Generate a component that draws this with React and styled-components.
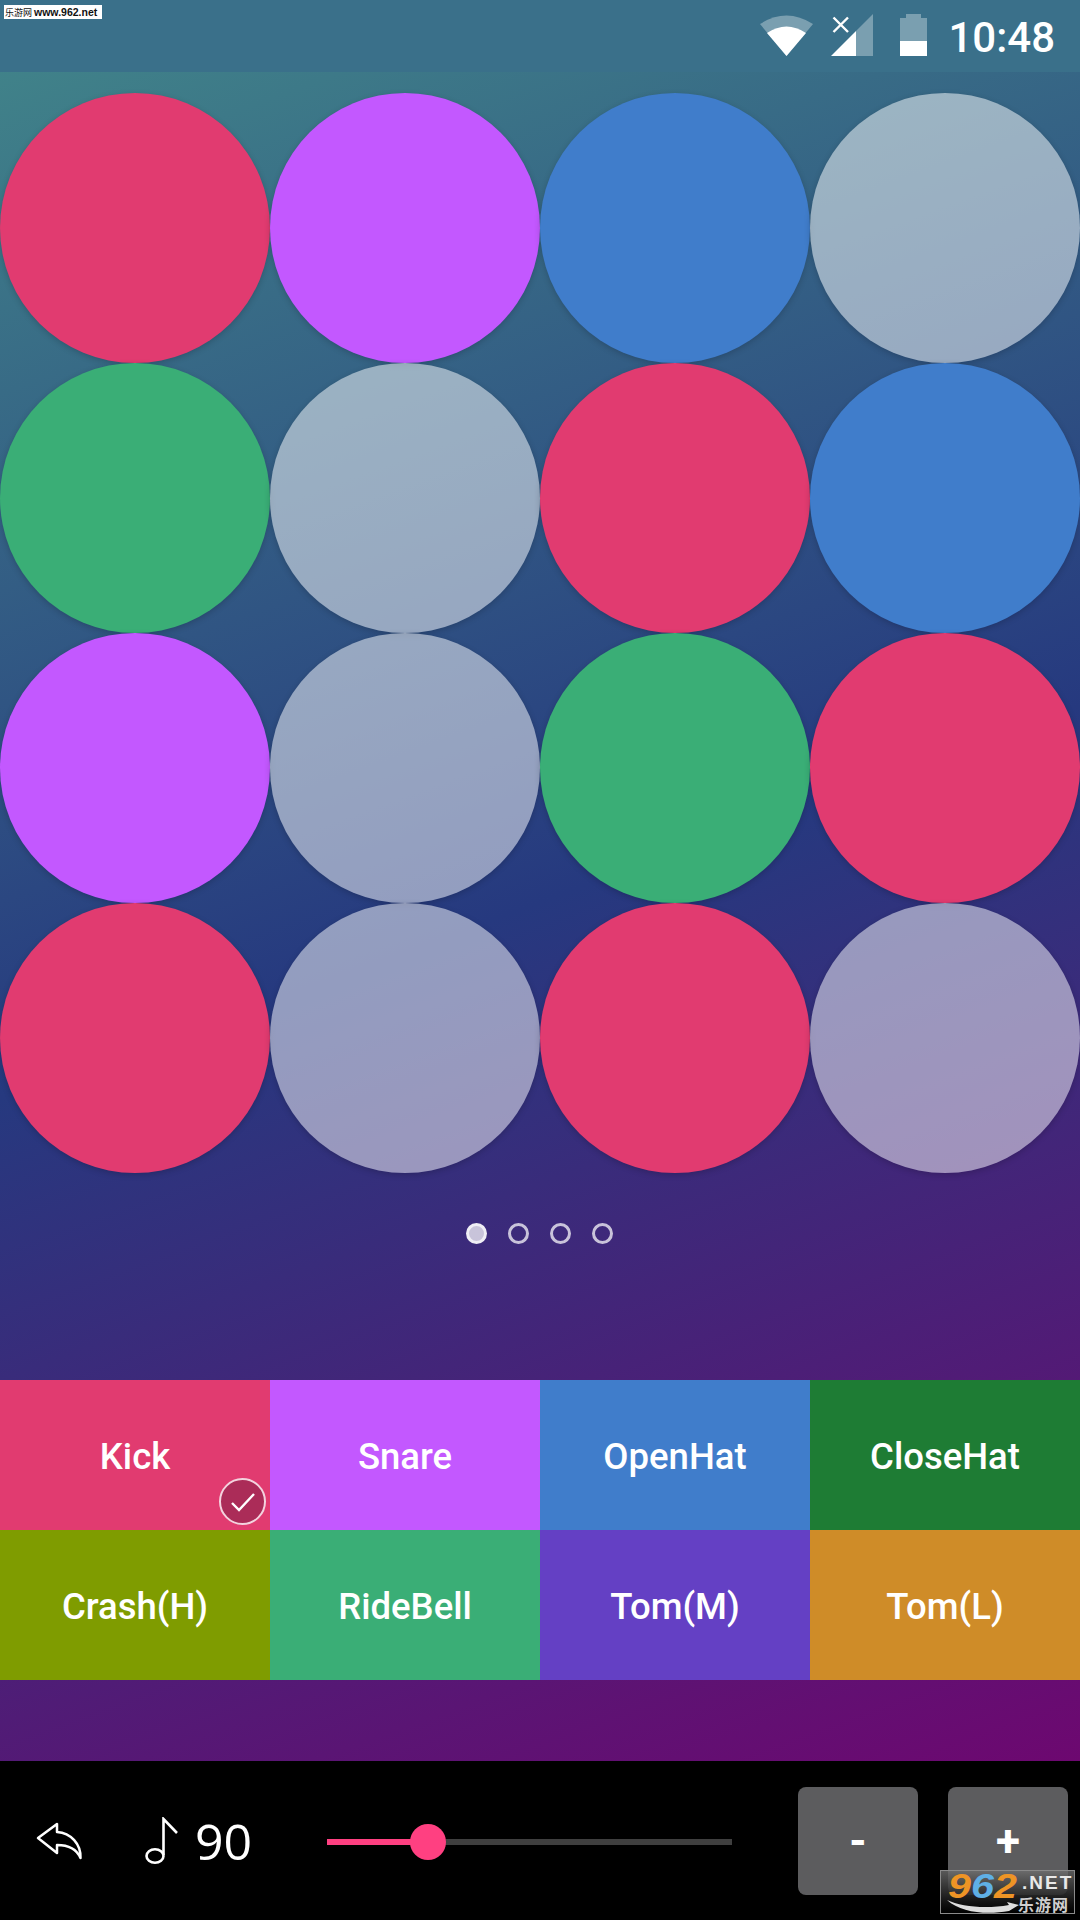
import React from 'react'
import styled, { createGlobalStyle } from 'styled-components'

const Global = createGlobalStyle`
    html, body {
        margin: 0;
        padding: 0;
        background: #000;
    }
    * {
        box-sizing: border-box;
    }
`

const COLORS = {
    red: '#e13b70',
    purple: '#c358ff',
    blue: '#407dcb',
    green: '#3aae76',
    gray: 'rgba(255,255,255,0.5)',
}

const PADS = [
    'red', 'purple', 'blue', 'gray',
    'green', 'gray', 'red', 'blue',
    'purple', 'gray', 'green', 'red',
    'red', 'gray', 'red', 'gray',
]

const TILES = [
    { name: 'Kick', color: '#e13b70', checked: true },
    { name: 'Snare', color: '#c358ff' },
    { name: 'OpenHat', color: '#407dcb' },
    { name: 'CloseHat', color: '#1e7c34' },
    { name: 'Crash(H)', color: '#7f9c00' },
    { name: 'RideBell', color: '#3aae76' },
    { name: 'Tom(M)', color: '#6440c4' },
    { name: 'Tom(L)', color: '#cf8c28' },
]

const App = () => {
    return (
        <Screen>
            <Global />
            <Main>
                <StatusBar>
                    <Corner>乐游网 <b>www.962.net</b></Corner>
                    <svg width="53" height="42" viewBox="0 0 53 42">
                        <path d="M0 10Q26.5 -7 53 10L26.5 42Z" fill="#fff" opacity="0.33" />
                        <path d="M7 19Q26.5 6 46 19L26.5 42Z" fill="#fff" />
                    </svg>
                    <SignalIcon width="42" height="42" viewBox="0 0 42 42">
                        <path d="M42 0V42H25V17Z" fill="#fff" opacity="0.33" />
                        <path d="M25 17V42H0Z" fill="#fff" />
                        <path d="M2.5 3.5L17 18M17 3.5L2.5 18" stroke="#fff" strokeWidth="2.4" fill="none" />
                    </SignalIcon>
                    <BatteryIcon width="27" height="42" viewBox="0 0 27 42">
                        <path d="M6 0H21V4H27V42H0V4H6Z" fill="#fff" opacity="0.33" />
                        <path d="M0 27H27V42H0Z" fill="#fff" />
                    </BatteryIcon>
                    <Clock>10:48</Clock>
                </StatusBar>
                <PadGrid>
                    {PADS.map((p, i) => <Pad key={i} color={COLORS[p]} />)}
                </PadGrid>
                <Pager>
                    {[0, 1, 2, 3].map(i => <Dot key={i} active={i === 0} />)}
                </Pager>
                <TileGrid>
                    {TILES.map(t => (
                        <Tile key={t.name} color={t.color}>
                            {t.name}
                            {t.checked &&
                                <Badge>
                                    <svg width="26" height="22" viewBox="0 0 26 22">
                                        <path d="M2 12L9 19L24 3" stroke="#fff" strokeWidth="2.4" fill="none" />
                                    </svg>
                                </Badge>
                            }
                        </Tile>
                    ))}
                </TileGrid>
            </Main>
            <BottomBar>
                <BackIcon width="48" height="42" viewBox="0 0 48 42">
                    <path d="M3 18L22 4V12C36 13 46 24 45.5 38C42 30 34 25 22 25V33Z" stroke="#fff" strokeWidth="2.5" strokeLinejoin="round" fill="none" />
                </BackIcon>
                <NoteIcon width="35" height="48" viewBox="0 0 35 48">
                    <ellipse cx="10" cy="39" rx="8.5" ry="6.8" stroke="#fff" strokeWidth="2.6" fill="none" />
                    <path d="M18.5 38V2L32 16" stroke="#fff" strokeWidth="2.6" fill="none" />
                </NoteIcon>
                <Tempo>90</Tempo>
                <Slider>
                    <SliderFill style={{ width: 101 }} />
                    <Thumb style={{ left: 83 }} />
                </Slider>
                <StepButton>-</StepButton>
                <StepButton>+</StepButton>
            </BottomBar>
            <SiteLogo>
                <LogoNumber>
                    <span>9</span><LogoBlue>6</LogoBlue><span>2</span>
                </LogoNumber>
                <LogoNet>.NET</LogoNet>
                <LogoName>乐游网</LogoName>
                <LogoSwoosh width="72" height="14" viewBox="0 0 72 14">
                    <path d="M0 0C14 7 40 9 62 5L60 2L72 5L62 11C40 15 14 13 0 0Z" fill="#ddd" />
                </LogoSwoosh>
            </SiteLogo>
        </Screen>
    )
}

const Screen = styled.div`
    position: relative;
    width: 1080px;
    height: 1920px;
    overflow: hidden;
    background: #000;
    font-family: 'Roboto', sans-serif;
`

const Main = styled.div`
    height: 1761px;
    background: linear-gradient(160deg, #42878a 0%, #26397f 51%, #6d0870 100%);
`

const StatusBar = styled.div`
    position: relative;
    display: flex;
    align-items: center;
    justify-content: flex-end;
    height: 72px;
    padding: 0 25px 2px 0;
    background: #3a708a;
`

const Corner = styled.div`
    position: absolute;
    top: 5px;
    left: 4px;
    width: 98px;
    height: 14px;
    padding-left: 1px;
    background: #fff;
    color: #111;
    font-family: 'Noto Sans CJK SC', sans-serif;
    font-size: 9px;
    line-height: 14px;
    white-space: nowrap;
    b {
        font-family: 'Liberation Sans', sans-serif;
        font-size: 10.5px;
        font-weight: 700;
    }
`

const SignalIcon = styled.svg`
    margin-left: 18px;
`

const BatteryIcon = styled.svg`
    margin-left: 27px;
`

const Clock = styled.div`
    margin: 6px 0 0 21px;
    color: #fff;
    font-size: 42px;
    font-weight: 500;
    line-height: 46px;
`

const PadGrid = styled.div`
    display: grid;
    grid-template-columns: repeat(4, 270px);
    grid-auto-rows: 270px;
    padding-top: 21px;
`

const Pad = styled.div`
    border-radius: 50%;
    background: ${props => props.color};
    box-shadow: 0 2px 6px rgba(0,0,0,0.18);
`

const Pager = styled.div`
    display: flex;
    justify-content: center;
    gap: 21px;
    margin-top: 50px;
    padding-right: 2px;
`

const Dot = styled.div`
    width: 21px;
    height: 21px;
    border-radius: 50%;
    border: 3.5px solid rgba(255,255,255,0.72);
    background: ${props => props.active ? 'rgba(255,255,255,0.72)' : 'transparent'};
`

const TileGrid = styled.div`
    display: grid;
    grid-template-columns: repeat(4, 270px);
    grid-auto-rows: 150px;
    margin-top: 136px;
`

const Tile = styled.div`
    position: relative;
    display: flex;
    align-items: center;
    justify-content: center;
    padding-top: 3px;
    background: ${props => props.color};
    color: #fff;
    font-size: 36.5px;
    font-weight: 500;
`

const Badge = styled.div`
    position: absolute;
    right: 4px;
    bottom: 5px;
    display: flex;
    align-items: center;
    justify-content: center;
    width: 47px;
    height: 47px;
    border-radius: 50%;
    border: 2.5px solid #f3d3de;
    background: #ab2c58;
`

const BottomBar = styled.div`
    display: flex;
    align-items: center;
    height: 159px;
    padding: 0 12px 0 35px;
    background: #000;
`

const BackIcon = styled.svg`
    flex-shrink: 0;
`

const NoteIcon = styled.svg`
    flex-shrink: 0;
    margin-left: 62px;
`

const Tempo = styled.div`
    width: 58px;
    margin-left: 15px;
    color: #fff;
    font-family: 'Open Sans', sans-serif;
    font-size: 50px;
    line-height: 56px;
`

const Slider = styled.div`
    position: relative;
    width: 405px;
    height: 6px;
    margin: 2px 66px 0 74px;
    background: #3f3f3f;
`

const SliderFill = styled.div`
    height: 100%;
    background: #ff4081;
`

const Thumb = styled.div`
    position: absolute;
    top: -15px;
    width: 36px;
    height: 36px;
    border-radius: 50%;
    background: #ff4081;
`

const StepButton = styled.div`
    display: flex;
    align-items: center;
    justify-content: center;
    flex-shrink: 0;
    width: 120px;
    height: 108px;
    margin-right: 30px;
    border-radius: 8px;
    background: #5c5c5e;
    color: #fff;
    font-size: 44px;
    font-weight: 700;
    &:last-child {
        margin-right: 0;
    }
`

const SiteLogo = styled.div`
    position: absolute;
    left: 940px;
    top: 1870px;
    width: 135px;
    height: 44px;
    border: 1px solid #8a8a8a;
    background: linear-gradient(180deg, rgba(110,110,110,0.8) 0%, rgba(20,20,20,0.9) 75%, #000 100%);
`

const LogoNumber = styled.div`
    position: absolute;
    left: 7px;
    top: -3px;
    color: #ee9425;
    font-family: 'Liberation Sans', sans-serif;
    font-size: 35px;
    line-height: 36px;
    font-style: italic;
    font-weight: 700;
    transform: scaleX(1.18);
    transform-origin: left center;
`

const LogoBlue = styled.span`
    color: #5fb0e6;
`

const LogoNet = styled.div`
    position: absolute;
    left: 81px;
    top: 1px;
    color: #e8e8e8;
    font-family: 'Liberation Sans', sans-serif;
    font-size: 19px;
    line-height: 22px;
    font-weight: 700;
    letter-spacing: 2px;
`

const LogoName = styled.div`
    position: absolute;
    left: 77px;
    top: 23px;
    color: #cfcfcf;
    font-family: 'Noto Sans CJK SC', sans-serif;
    font-size: 16px;
    line-height: 20px;
    font-weight: 700;
    letter-spacing: 1px;
`

const LogoSwoosh = styled.svg`
    position: absolute;
    left: 6px;
    top: 29px;
`

export default App
